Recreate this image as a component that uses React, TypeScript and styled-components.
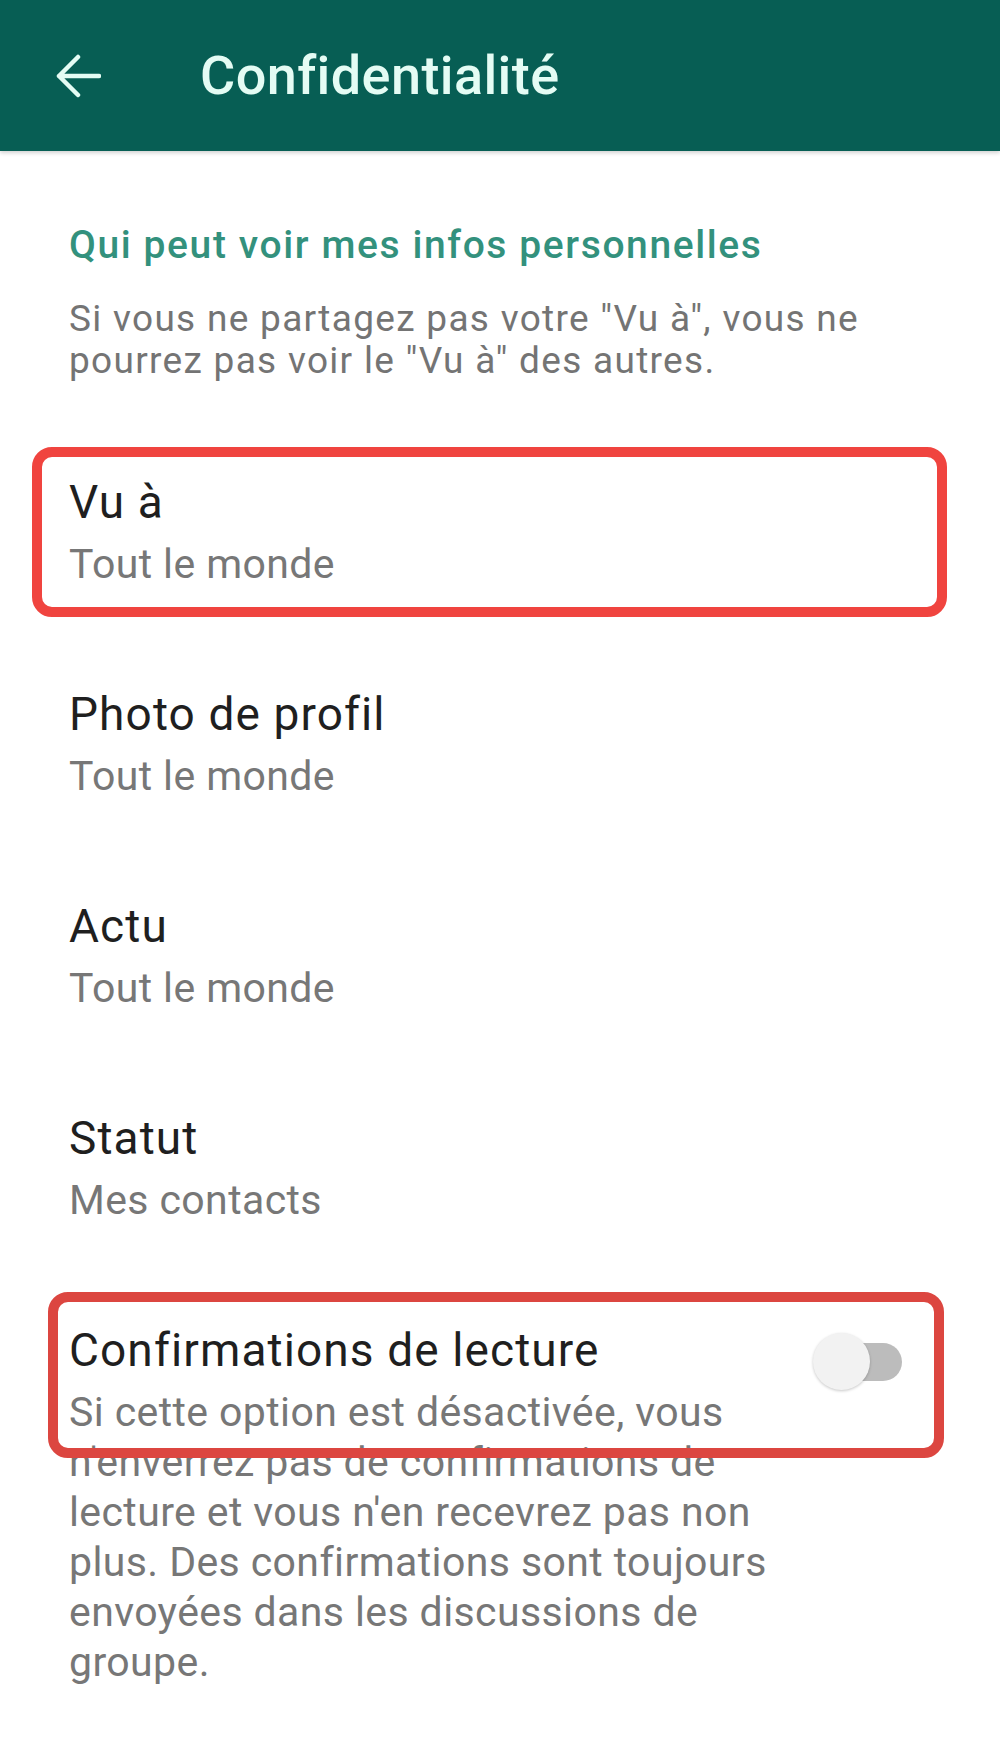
import { FC } from 'react'

import styled, { createGlobalStyle } from 'styled-components'

const GlobalStyle = createGlobalStyle`
	html, body {
		margin: 0;
		padding: 0;
		background: #ffffff;
	}
	body {
		font-family: Roboto, 'Noto Sans', 'Liberation Sans', sans-serif;
		-webkit-font-smoothing: antialiased;
	}
`

const Page = styled.div`
	width: 1000px;
	min-height: 1747px;
	background: #ffffff;
	overflow: hidden;
`

const TopBar = styled.header`
	height: 151px;
	display: flex;
	align-items: center;
	padding-left: 55px;
	gap: 99px;
	background: #075e54;
	box-shadow: 0 2px 4px rgba(0, 0, 0, 0.18);
	position: relative;
	z-index: 2;
`

const BackButton = styled.button`
	width: 46px;
	height: 46px;
	padding: 0;
	border: none;
	background: none;
	display: flex;
	cursor: pointer;
	svg {
		width: 46px;
		height: 46px;
	}
`

const Title = styled.h1`
	margin: 0;
	font-size: 54px;
	font-weight: 500;
	line-height: 64px;
	color: #e4fcf4;
	letter-spacing: 0.4px;
`

const Section = styled.section`
	padding: 70px 0 0 69px;
`

const SectionTitle = styled.h2`
	margin: 0;
	font-size: 39px;
	font-weight: 500;
	line-height: 48px;
	letter-spacing: 1.6px;
	color: #33917d;
`

const SectionNote = styled.p`
	margin: 29px 0 0;
	width: 840px;
	font-size: 37px;
	line-height: 42px;
	letter-spacing: 1.3px;
	color: #747474;
`

const List = styled.ul`
	list-style: none;
	margin: 42px 0 0;
	padding: 0;
`

const Item = styled.li`
	position: relative;
	display: flex;
	align-items: flex-start;
	min-height: 212px;
	box-sizing: border-box;
	padding: 50px 98px 47px 69px;
`

const ItemText = styled.div`
	flex: 1;
	max-width: 740px;
`

const ItemTitle = styled.div`
	font-size: 46px;
	line-height: 56px;
	letter-spacing: 1.1px;
	color: #1f1f1f;
`

const ItemValue = styled.div`
	margin-top: 9px;
	font-size: 41px;
	line-height: 50px;
	letter-spacing: 0.4px;
	color: #777777;
`

const Switch = styled.span`
	position: relative;
	flex: none;
	margin: 21px 0 0 auto;
	width: 80px;
	height: 38px;
	border-radius: 19px;
	background: #bcbcbc;
`

const SwitchThumb = styled.span`
	position: absolute;
	left: -9px;
	top: -10px;
	width: 57px;
	height: 57px;
	border-radius: 50%;
	background: #f2f2f2;
	box-shadow: 0 1px 3px rgba(0, 0, 0, 0.22);
`

const Highlight = styled.span<{ $top: number; $left: number; $width: number; $height: number; $color: string }>`
	position: absolute;
	top: ${p => p.$top}px;
	left: ${p => p.$left}px;
	width: ${p => p.$width}px;
	height: ${p => p.$height}px;
	box-sizing: border-box;
	border: 10px solid ${p => p.$color};
	border-radius: 20px;
	pointer-events: none;
	z-index: 1;
`

const ArrowBack: FC = () => (
	<svg viewBox="0 0 46 46" fill="none">
		<path
			d="M44 23H4M23 4L4 23l19 19"
			stroke="#e4fcf4"
			strokeWidth="4.5"
			strokeLinecap="round"
			strokeLinejoin="round"
		/>
	</svg>
)

const items = [
	{ title: 'Vu à', value: 'Tout le monde' },
	{ title: 'Photo de profil', value: 'Tout le monde' },
	{ title: 'Actu', value: 'Tout le monde' },
	{ title: 'Statut', value: 'Mes contacts' },
]

const App: FC = () => {
	return (
		<Page>
			<GlobalStyle />
			<TopBar>
				<BackButton aria-label="Retour">
					<ArrowBack />
				</BackButton>
				<Title>Confidentialité</Title>
			</TopBar>
			<Section>
				<SectionTitle>Qui peut voir mes infos personnelles</SectionTitle>
				<SectionNote>
					Si vous ne partagez pas votre "Vu à", vous ne pourrez pas voir le "Vu à" des autres.
				</SectionNote>
			</Section>
			<List>
				{items.map((item, i) => (
					<Item key={item.title}>
						{i === 0 && <Highlight $top={23} $left={32} $width={915} $height={170} $color="#f0443f" />}
						<ItemText>
							<ItemTitle>{item.title}</ItemTitle>
							<ItemValue>{item.value}</ItemValue>
						</ItemText>
					</Item>
				))}
				<Item>
					<Highlight $top={20} $left={48} $width={896} $height={166} $color="#dc4640" />
					<ItemText>
						<ItemTitle>Confirmations de lecture</ItemTitle>
						<ItemValue>
							Si cette option est désactivée, vous n'enverrez pas de confirmations de lecture et vous
							n'en recevrez pas non plus. Des confirmations sont toujours envoyées dans les
							discussions de groupe.
						</ItemValue>
					</ItemText>
					<Switch>
						<SwitchThumb />
					</Switch>
				</Item>
			</List>
		</Page>
	)
}

export default App
